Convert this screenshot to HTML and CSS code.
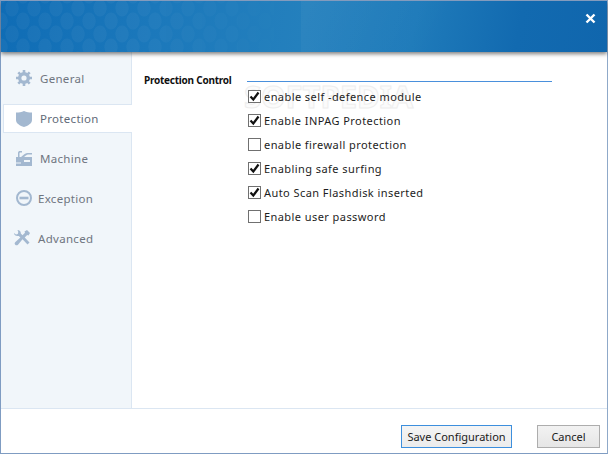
FILE: index.html
```html
<!DOCTYPE html>
<html lang="en">
<head>
<meta charset="utf-8">
<title>Protection Control</title>
<link rel="stylesheet" href="styles.css">
</head>
<body>
<div class="window">
  <header class="banner">
    <div class="dots"></div>
    <div class="sheen"></div>
    <svg class="close" width="11" height="11" viewBox="0 0 11 11"><path d="M1.500 1.500l8 8M9.500 1.500l-8 8" stroke="#fff" stroke-width="2.400" fill="none"/></svg>
  </header>
  <div class="middle">
    <nav class="side">
      <div class="tab">
        <svg class="ico" width="16" height="16" viewBox="0 0 16 16"><circle cx="8" cy="8" r="6" fill="#a3b8d0"/><path d="M8 0v16M0 8h16M2.300 2.300l11.400 11.400M13.700 2.300L2.300 13.700" stroke="#a3b8d0" stroke-width="2.600"/><circle cx="8" cy="8" r="2.600" fill="#f1f6fa"/></svg>
        <span>General</span>
      </div>
      <div class="tab active">
        <svg class="ico" width="16" height="16" viewBox="0 0 16 16"><path d="M0 1.500C3 1.500 5.500 1 8 0c2.500 1 5 1.500 8 1.500V9c0 3.500-4 5.800-8 7-4-1.200-8-3.500-8-7z" fill="#a3b8d0"/></svg>
        <span>Protection</span>
      </div>
      <div class="tab">
        <svg class="ico" width="16" height="16" viewBox="0 0 16 16"><path d="M0 7h2V3c0-1.500 1-2 2-2h2v1.500H4.500c-.8 0-1 .4-1 1V7H5l3-2.500c1.500-1.200 3-1.500 5-1.500h3v1.500h-3c-1.500 0-2.500.3-3.500 1.200L8 7h8v9H0z" fill="#a3b8d0"/><path d="M8 10h6v2H8z" fill="#f1f6fa"/><path d="M0 12.500h5v1H0z" fill="#f1f6fa"/></svg>
        <span>Machine</span>
      </div>
      <div class="tab tight">
        <svg class="ico" width="16" height="16" viewBox="0 0 16 16"><circle cx="8" cy="8" r="7" fill="none" stroke="#a3b8d0" stroke-width="2"/><path d="M3.500 6.700h9v2.600h-9z" fill="#a3b8d0"/></svg>
        <span>Exception</span>
      </div>
      <div class="tab tighter">
        <svg class="ico" width="16" height="16" viewBox="0 0 16 16"><path d="M3.500 0C5.500 0 7 1.500 6.800 3.500L8.500 5.300 11 2.800 10.500 1.500 13 0l3 3-1.500 2.500-1.300-.5-2.500 2.500 4.800 5-2 2-5-5.300-4.500 5.500c-.8.800-2 .800-2.800 0s-.7-1.900.2-2.700l5-4.400-1.600-1.700C2 6.400 0 5 0 2.900L2 4.500 3.800 4l.5-2z" fill="#a3b8d0"/></svg>
        <span>Advanced</span>
      </div>
    </nav>
    <main class="panel">
      <div class="watermark">SOFTPEDIA</div>
      <div class="heading">
        <h2>Protection Control</h2>
        <div class="rule"></div>
      </div>
      <ul class="opts">
        <li><span class="box"><svg width="11" height="11" viewBox="0 0 11 11"><path d="M1.500 5.500l2.800 3L9.500 1.500" stroke="#111" stroke-width="2.200" fill="none"/></svg></span>enable self -defence module</li>
        <li><span class="box"><svg width="11" height="11" viewBox="0 0 11 11"><path d="M1.500 5.500l2.800 3L9.500 1.500" stroke="#111" stroke-width="2.200" fill="none"/></svg></span>Enable INPAG Protection</li>
        <li><span class="box"></span>enable firewall protection</li>
        <li><span class="box"><svg width="11" height="11" viewBox="0 0 11 11"><path d="M1.500 5.500l2.800 3L9.500 1.500" stroke="#111" stroke-width="2.200" fill="none"/></svg></span>Enabling safe surfing</li>
        <li><span class="box"><svg width="11" height="11" viewBox="0 0 11 11"><path d="M1.500 5.500l2.800 3L9.500 1.500" stroke="#111" stroke-width="2.200" fill="none"/></svg></span>Auto Scan Flashdisk inserted</li>
        <li><span class="box"></span>Enable user password</li>
      </ul>
    </main>
  </div>
  <footer class="foot">
    <button class="btn primary">Save Configuration</button>
    <button class="btn cancel">Cancel</button>
  </footer>
</div>
</body>
</html>
```
FILE: styles.css
```css
* { box-sizing: border-box; }
html, body { margin: 0; padding: 0; }
body { width: 608px; height: 454px; background: #fff; font-family: "Noto Sans", "Open Sans", sans-serif; font-size: 11px; overflow: hidden; }
.window { width: 608px; height: 454px; display: flex; flex-direction: column; border: 1px solid #7f9cc2; border-top: 1px solid #8aa4c8; border-right-color: #8fa9c9; background: #fff; }
.banner { height: 51px; flex: none; position: relative; background: linear-gradient(100deg, #0f6cb5 0%, #1b78bb 25%, #2480bd 50%, #1f7bba 68%, #126ab0 85%, #1066ad 100%); box-shadow: 0 2px 4px rgba(60,60,60,.65); z-index: 2; overflow: hidden; }
.dots { position: absolute; left: 0; top: 0; width: 300px; height: 51px; background-image: radial-gradient(ellipse 7px 9px at 50% 50%, rgba(255,255,255,.04) 90%, transparent 100%), radial-gradient(ellipse 7px 9px at 50% 50%, rgba(255,255,255,.04) 90%, transparent 100%); background-size: 22px 26px; background-position: 0 -6px, 11px 7px; -webkit-mask-image: linear-gradient(90deg, #000 40%, transparent 100%); mask-image: linear-gradient(90deg, #000 40%, transparent 100%); }
.sheen { position: absolute; left: 300px; top: 0; width: 200px; height: 51px; background: linear-gradient(115deg, rgba(255,255,255,.04), rgba(255,255,255,0) 70%); }
.close { position: absolute; right: 11px; top: 12px; }
.middle { flex: 1; display: flex; min-height: 0; }
.side { width: 131px; flex: none; background: #f1f6fa; border-right: 1px solid #dbe6f2; padding-top: 6px; display: flex; flex-direction: column; }
.tab { height: 40px; display: flex; align-items: center; padding-left: 13px; gap: 8px; color: #6f7580; font-size: 11.5px; letter-spacing: .3px; margin-left: 2px; flex: none; }
.tab .ico { flex: none; }
.tab.active { background: #fff; border: 1px solid #dbe6f2; border-right: 0; height: 29px; margin: 6px -1px 5px 2px; padding-left: 12px; color: #5f6a78; position: relative; }
.tab.tight { gap: 6px; }
.tab.tighter { gap: 8px; padding-left: 11px; }
.panel { flex: 1; position: relative; padding: 20px 0 0 12px; }
.heading { display: flex; align-items: center; height: 16px; position: relative; }
h2 { margin: 0; font-size: 10px; font-weight: 700; letter-spacing: -.24px; color: #111; width: 103px; white-space: nowrap; }
.rule { width: 305px; height: 1px; background: #4a90dc; margin-top: 2px; }
.watermark { position: absolute; left: 112px; top: 25px; font-size: 31px; font-weight: 700; color: #fbfbfb; -webkit-text-stroke: 1px #eeeeee; line-height: 38px; white-space: nowrap; }
.opts { list-style: none; margin: -4px 0 0; padding: 0 0 0 104px; position: relative; }
.opts li { height: 24px; display: flex; align-items: center; gap: 3px; color: #1d1d1d; font-size: 11px; letter-spacing: .43px; white-space: nowrap; }
.box { width: 13px; height: 13px; flex: none; border: 1px solid #707070; background: #fff; display: block; }
.box svg { display: block; }
.foot { height: 45px; flex: none; border-top: 1px solid #dbe6f2; display: flex; justify-content: flex-end; align-items: flex-start; padding: 16px 7px 0 0; gap: 25px; }
.btn { height: 23px; font: 11px "Noto Sans", sans-serif; letter-spacing: 0; color: #1a1a1a; background: linear-gradient(#f2f2f2, #e6e6e6); border: 1px solid #adadad; padding: 0; }
.primary { width: 111px; border-color: #3d8fdd; background: linear-gradient(#f4f4f4, #ececec); }
.cancel { width: 63px; }
```
